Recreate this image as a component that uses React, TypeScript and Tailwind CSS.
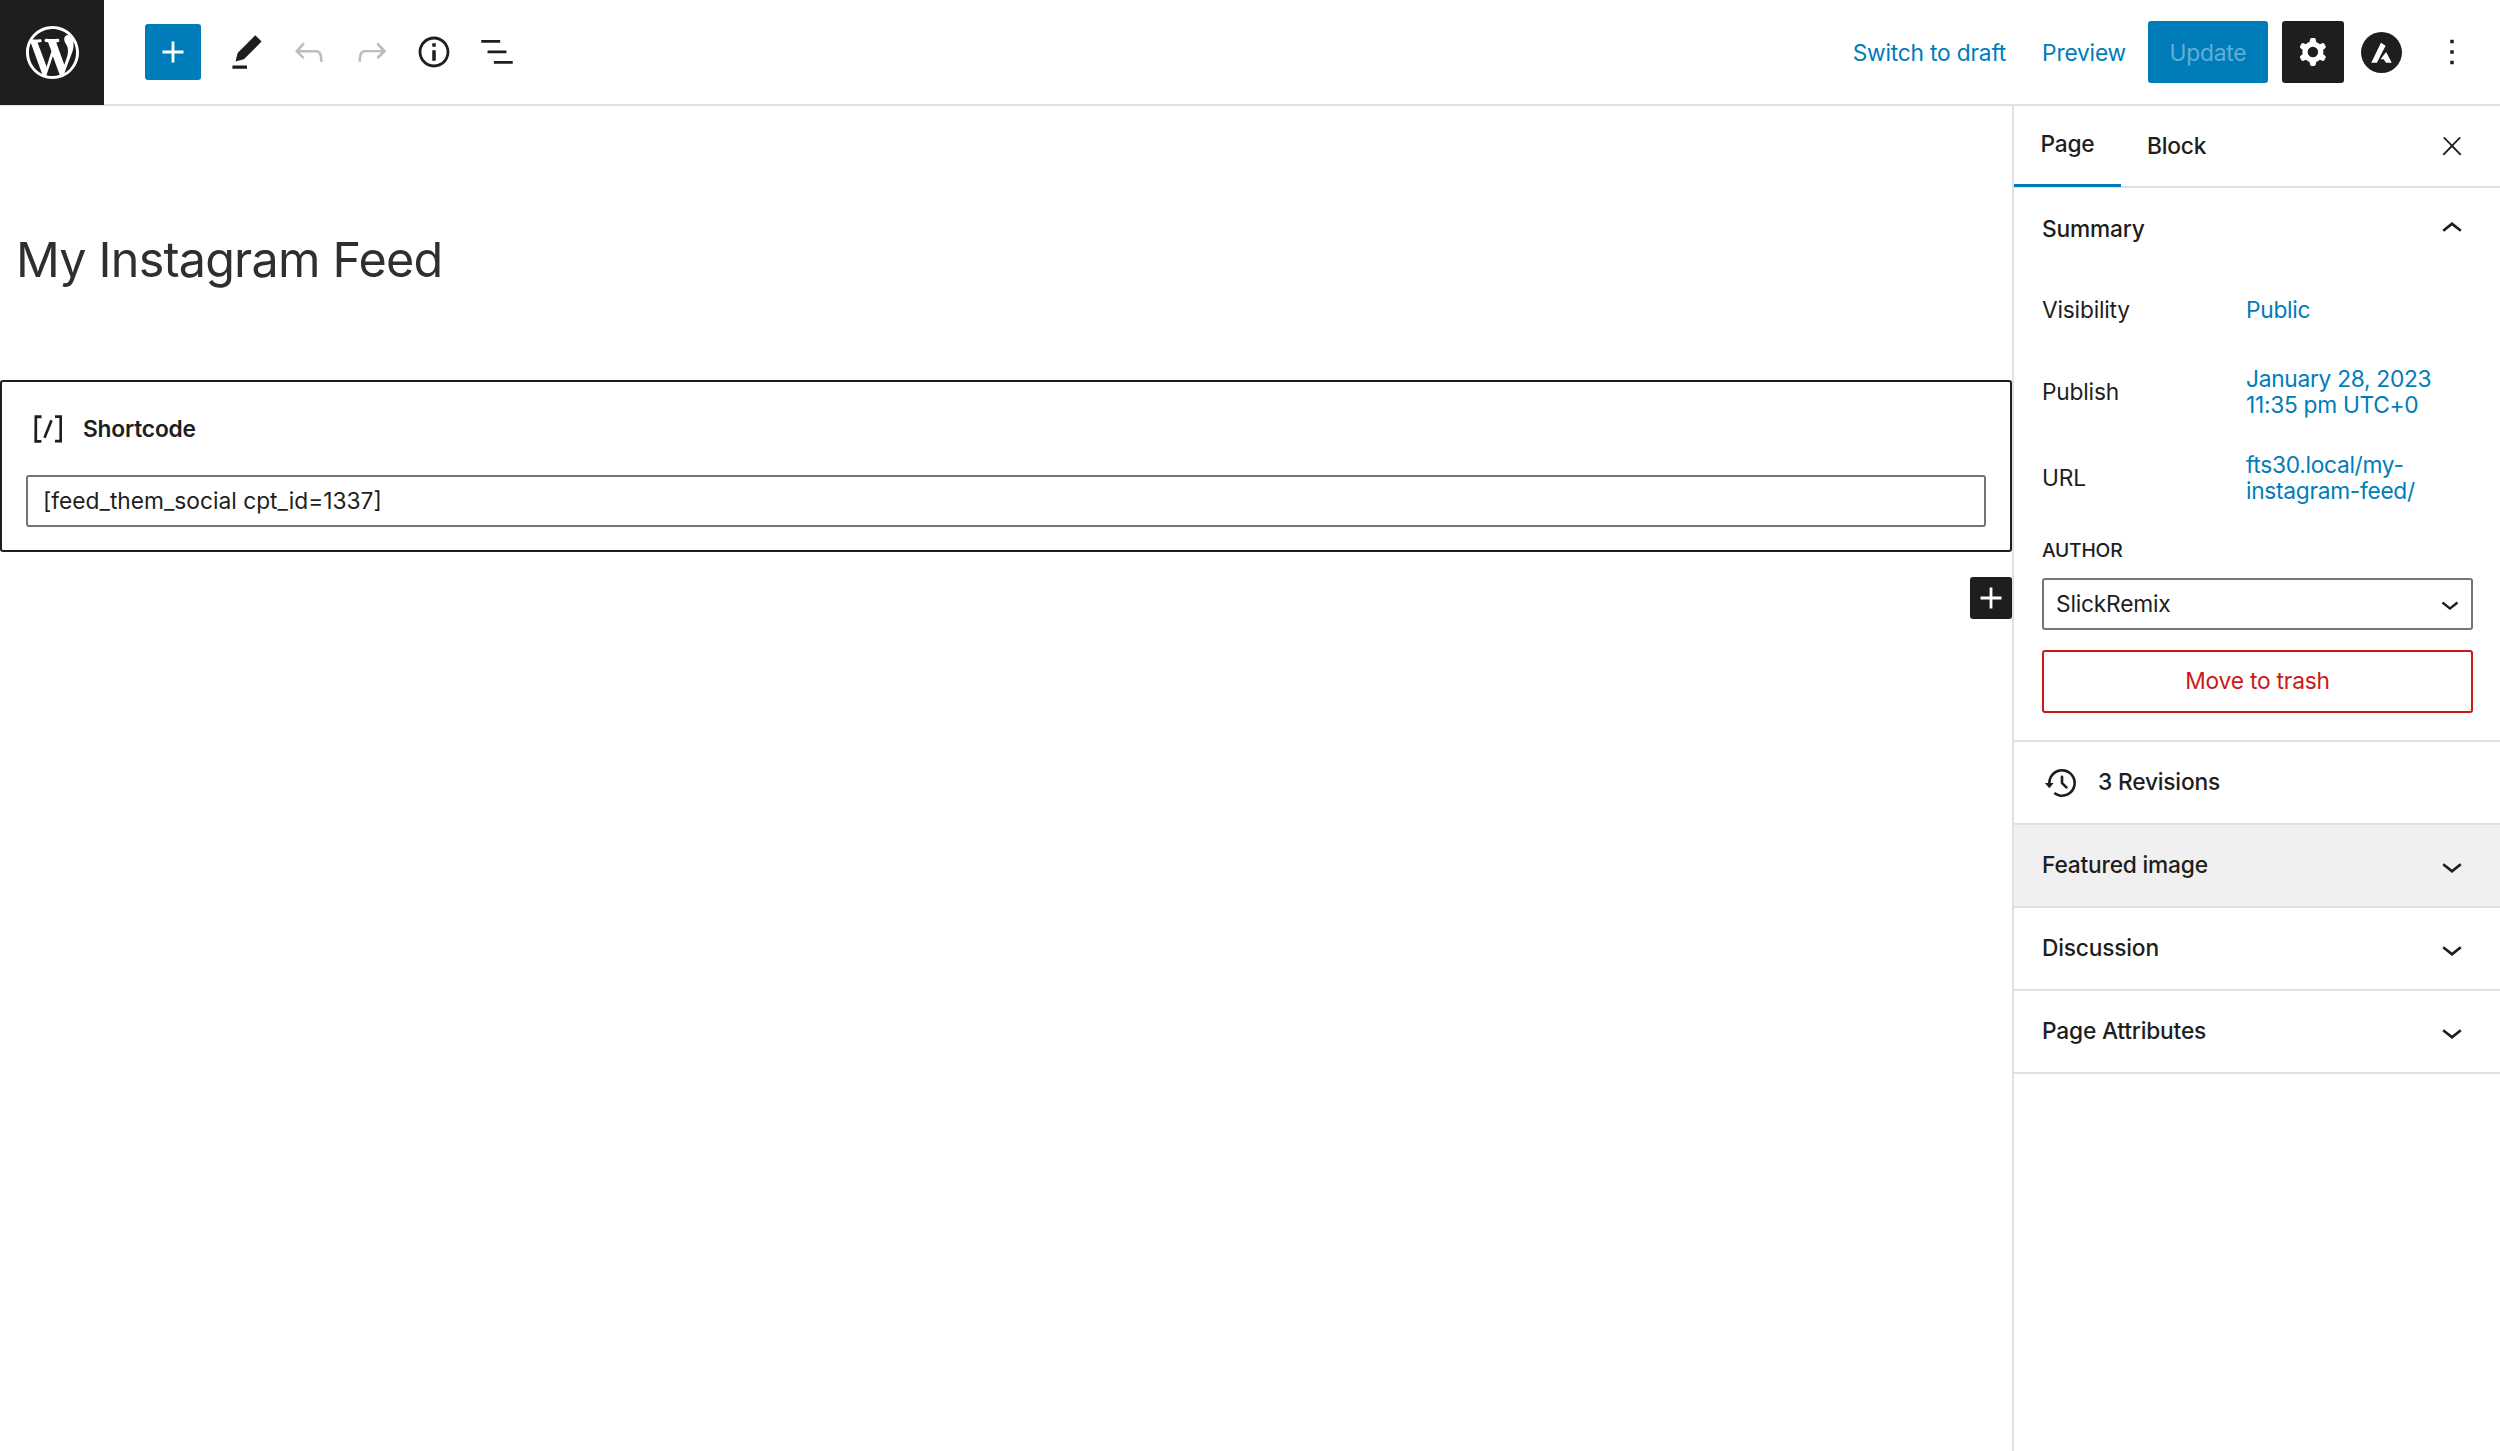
import type { ReactNode } from "react";

function Icon({ d, className, box = "0 0 24 24" }: { d: string; className: string; box?: string }) {
  return (
    <svg viewBox={box} className={className} fill="currentColor" aria-hidden="true">
      <path d={d} fillRule="evenodd" clipRule="evenodd" />
    </svg>
  );
}

const PLUS = "M18 11.2h-5.2V6h-1.6v5.2H6v1.6h5.2V18h1.6v-5.2H18z";
const PEN = "m19 7-3-3-8.5 8.5-1 4 4-1L19 7Zm-7 11.5H5V20h7v-1.5Z";
const UNDO = "M18.3 11.7c-.6-.6-1.4-.9-2.3-.9H6.7l2.9-3.3-1.1-1-4.5 5L8.5 16l1-1-2.7-2.7H16c.5 0 .9.2 1.3.5 1 1 1 3.4 1 4.5v.3h1.5v-.2c0-1.5 0-4.3-1.5-5.7z";
const REDO = "M15.6 6.5l-1.1 1 2.9 3.3H8c-.9 0-1.7.3-2.3.9-1.4 1.5-1.4 4.2-1.4 5.6v.2h1.5v-.3c0-1.1 0-3.5 1-4.5.3-.3.7-.5 1.3-.5h9.2L14.5 15l1.1 1.1 4.6-4.6-4.6-5z";
const INFO = "M12 3.2c-4.8 0-8.8 3.9-8.8 8.8 0 4.8 3.9 8.8 8.8 8.8 4.8 0 8.8-3.9 8.8-8.8 0-4.8-4-8.8-8.8-8.8zm0 16c-4 0-7.2-3.3-7.2-7.2C4.8 8 8 4.8 12 4.8s7.2 3.3 7.2 7.2c0 4-3.2 7.2-7.2 7.2zM11 17h2v-6h-2v6zm0-8h2V7h-2v2z";
const LIST = "M3 5.2h10.8v1.5H3zM6.6 11.2h10.8v1.5H6.6zM10.2 17.2H21v1.5H10.2z";
const COG = "M10.289 4.836A1 1 0 0111.275 4h1.306a1 1 0 01.987.836l.244 1.466c.787.26 1.503.679 2.108 1.218l1.393-.522a1 1 0 011.216.437l.653 1.13a1 1 0 01-.23 1.273l-1.148.944a6.025 6.025 0 010 2.435l1.149.946a1 1 0 01.23 1.272l-.653 1.13a1 1 0 01-1.216.437l-1.394-.522c-.605.54-1.32.958-2.108 1.218l-.244 1.466a1 1 0 01-.987.836h-1.306a1 1 0 01-.986-.836l-.244-1.466a5.995 5.995 0 01-2.108-1.218l-1.394.522a1 1 0 01-1.217-.436l-.653-1.131a1 1 0 01.23-1.272l1.149-.946a6.026 6.026 0 010-2.435l-1.148-.944a1 1 0 01-.23-1.272l.653-1.131a1 1 0 011.217-.437l1.393.522a5.994 5.994 0 012.108-1.218l.244-1.466zM14.929 12a3 3 0 11-6 0 3 3 0 016 0z";
const MORE = "M13 19h-2v-2h2v2zm0-6h-2v-2h2v2zm0-6h-2V5h2v2z";
const CLOSE = "M13 11.8l6.1-6.3-1-1-6.1 6.2-6.1-6.2-1 1 6.1 6.3-6.5 6.7 1 1 6.5-6.6 6.5 6.6 1-1z";
const UP = "M6.5 12.4L12 8l5.5 4.4-.9 1.2L12 10l-4.5 3.6-1-1.2z";
const DOWN = "M17.5 11.6L12 16l-5.5-4.4.9-1.2L12 14l4.5-3.6 1 1.2z";
const SHORTCODE = "M16 4.2v1.5h2.5v12.5H16v1.5h4V4.2h-4zM4.2 19.8h4v-1.5H5.8V5.8h2.5V4.2h-4l-.1 15.6zm5.1-3.1l1.4.6 4-10-1.4-.6-4 10z";
const BACKUP = "M5.5 12h1.75l-2.5 3-2.5-3H4a8 8 0 113.134 6.35l.907-1.194A6.5 6.5 0 105.5 12zm9.53 1.97l-2.28-2.28V8.5a.75.75 0 00-1.5 0V12a.747.747 0 00.218.529l2.5 2.5a.75.75 0 101.06-1.061z";
const WP = "M20 10c0-5.51-4.49-10-10-10C4.48 0 0 4.49 0 10c0 5.52 4.48 10 10 10 5.51 0 10-4.48 10-10zM7.78 15.37L4.37 6.22c.55-.02 1.17-.08 1.17-.08.5-.06.44-1.13-.06-1.11 0 0-1.45.11-2.37.11-.18 0-.37 0-.58-.01C4.12 2.69 6.87 1.11 10 1.11c2.33 0 4.45.87 6.05 2.34-.68-.11-1.65.39-1.65 1.58 0 .74.45 1.36.9 2.1.35.61.55 1.36.55 2.46 0 1.49-1.4 5-1.4 5l-3.03-8.37c.54-.02.82-.17.82-.17.5-.05.44-1.25-.06-1.22 0 0-1.44.12-2.38.12-.87 0-2.33-.12-2.33-.12-.5-.03-.56 1.2-.06 1.22l.92.08 1.26 3.41zM17.41 10c.24-.64.74-1.87.43-4.25.7 1.29 1.05 2.71 1.05 4.25 0 3.29-1.73 6.24-4.4 7.78.97-2.59 1.94-5.2 2.92-7.78zM6.1 18.09C3.12 16.65 1.11 13.53 1.11 10c0-1.3.23-2.48.72-3.59C3.25 10.3 4.67 14.2 6.1 18.09zm4.03-6.63l2.58 6.98c-.86.29-1.76.45-2.71.45-.79 0-1.57-.11-2.29-.33.81-2.38 1.62-4.74 2.42-7.1z";

function ToolButton({ d, muted, large }: { d: string; muted?: boolean; large?: boolean }) {
  return (
    <div className={`flex h-[56px] w-[62.5px] items-center justify-center ${muted ? "text-[#bdbdbd]" : "text-[#1e1e1e]"}`}>
      <Icon d={d} className={large ? "h-[50px] w-[50px]" : "h-[42px] w-[42px]"} />
    </div>
  );
}

function Collapsed({ title, shaded }: { title: string; shaded?: boolean }) {
  return (
    <div className={`flex h-[83px] items-center justify-between border-b-2 border-[#e0e0e0] pl-[28px] pr-[27px] ${shaded ? "bg-[#f0f0f0]" : ""}`}>
      <span className="text-[22.75px] font-medium">{title}</span>
      <Icon d={DOWN} className="h-[42px] w-[42px]" />
    </div>
  );
}

function Row({ label, className, children }: { label: string; className: string; children: ReactNode }) {
  return (
    <div className={`flex items-center ${className}`}>
      <span className="w-[204px] shrink-0">{label}</span>
      <span className="leading-[26.5px] tracking-[-0.3px] text-[#007cba]">{children}</span>
    </div>
  );
}

export default function App() {
  return (
    <div className="flex h-[1451px] w-[2500px] flex-col overflow-hidden bg-white font-['Inter','Liberation_Sans',sans-serif] text-[22.75px] tracking-[-0.2px] text-[#1e1e1e]">
      {/* top bar */}
      <header className="flex h-[106px] shrink-0 items-center border-b-2 border-[#e0e0e0]">
        <div className="flex h-[105px] w-[104px] items-center justify-center self-start bg-[#1e1e1e] text-white">
          <Icon d={WP} box="0 0 20 20" className="h-[53px] w-[53px]" />
        </div>
        <div className="ml-[41px] flex h-[56px] w-[56px] items-center justify-center rounded-[3px] bg-[#007cba] text-white">
          <Icon d={PLUS} className="h-[42px] w-[42px]" />
        </div>
        <div className="ml-[14.5px] flex items-center">
          <ToolButton d={PEN} large />
          <ToolButton d={UNDO} muted />
          <ToolButton d={REDO} muted />
          <ToolButton d={INFO} />
          <ToolButton d={LIST} />
        </div>
        <div className="ml-auto flex items-center pr-[27px]">
          <span className="pt-[2px] text-[#007cba]">Switch to draft</span>
          <span className="ml-[36px] pt-[2px] text-[#007cba]">Preview</span>
          <div className="ml-[22px] flex h-[62px] w-[120px] items-center justify-center rounded-[3px] bg-[#007cba] pt-[2px] text-white/40">Update</div>
          <div className="ml-[14px] flex h-[62px] w-[62px] items-center justify-center rounded-[3px] bg-[#1e1e1e] text-white">
            <Icon d={COG} className="h-[42px] w-[42px]" />
          </div>
          <svg viewBox="0 0 40 40" className="ml-[17px] h-[41px] w-[41px]" aria-hidden="true">
            <circle cx="20" cy="20" r="20" fill="#1e1e1e" />
            <path d="M19.5 10.5L24 13.5L15.5 30H10ZM24.5 19.5L30 30H24.5L22 26.5H19Z" fill="#fff" />
          </svg>
          <Icon d={MORE} className="ml-[29px] h-[42px] w-[42px]" />
        </div>
      </header>

      <div className="flex min-h-0 flex-1">
        {/* editor canvas */}
        <main className="min-w-0 flex-1">
          <h1 className="ml-[16px] mt-[119px] text-[48.5px] font-normal leading-[70px] tracking-[-0.8px] text-[#2f2f2f]">My Instagram Feed</h1>
          <section className="mt-[85px] h-[172px] rounded-[3px] border-2 border-[#1e1e1e] pl-[24px] pr-[24px]">
            <div className="mt-[26px] flex h-[42px] items-center">
              <Icon d={SHORTCODE} className="ml-[1px] h-[42px] w-[42px]" />
              <span className="ml-[14px] font-semibold">Shortcode</span>
            </div>
            <div className="mt-[25px] flex h-[52px] items-center rounded-[3px] border-2 border-[#757575] pl-[15px] tracking-[0px]">[feed_them_social cpt_id=1337]</div>
          </section>
          <div className="ml-auto mt-[25px] flex h-[42px] w-[42px] items-center justify-center rounded-[3px] bg-[#1e1e1e] text-white">
            <Icon d={PLUS} className="h-[42px] w-[42px]" />
          </div>
        </main>

        {/* settings sidebar */}
        <aside className="flex w-[488px] shrink-0 flex-col border-l-2 border-[#e0e0e0]">
          <div className="flex h-[82px] shrink-0 items-center border-b-2 border-[#e0e0e0]">
            <div className="flex h-[82px] w-[107px] items-center justify-center border-b-[3px] border-[#007cba] font-medium">Page</div>
            <div className="ml-[26px] font-medium">Block</div>
            <Icon d={CLOSE} className="ml-auto mr-[33px] h-[30px] w-[30px]" />
          </div>

          <div className="h-[554px] shrink-0 border-b-2 border-[#e0e0e0] pl-[28px] pr-[27px]">
            <div className="flex h-[82px] items-center justify-between">
              <span className="font-medium">Summary</span>
              <Icon d={UP} className="h-[42px] w-[42px]" />
            </div>
            <Row label="Visibility" className="mt-[20px] h-[40px]">Public</Row>
            <Row label="Publish" className="mt-[36px] h-[52px]">January 28, 2023<br />11:35 pm UTC+0</Row>
            <Row label="URL" className="mt-[34px] h-[52px]">fts30.local/my-<br />instagram-feed/</Row>
            <div className="mt-[35px] text-[19.25px] font-medium uppercase leading-[22px]">Author</div>
            <div className="mt-[17px] flex h-[52px] items-center justify-between rounded-[3px] border-2 border-[#757575] pl-[12px] pr-[3px]">
              <span>SlickRemix</span>
              <Icon d={DOWN} className="h-[36px] w-[36px]" />
            </div>
            <div className="mt-[20px] flex h-[63px] items-center justify-center rounded-[3px] border-2 border-[#cc1818] text-[#cc1818]">Move to trash</div>
          </div>

          <div className="flex h-[83px] shrink-0 items-center border-b-2 border-[#e0e0e0] pl-[27px]">
            <Icon d={BACKUP} className="h-[42px] w-[42px]" />
            <span className="ml-[15px] font-medium">3 Revisions</span>
          </div>
          <Collapsed title="Featured image" shaded />
          <Collapsed title="Discussion" />
          <Collapsed title="Page Attributes" />
        </aside>
      </div>
    </div>
  );
}
